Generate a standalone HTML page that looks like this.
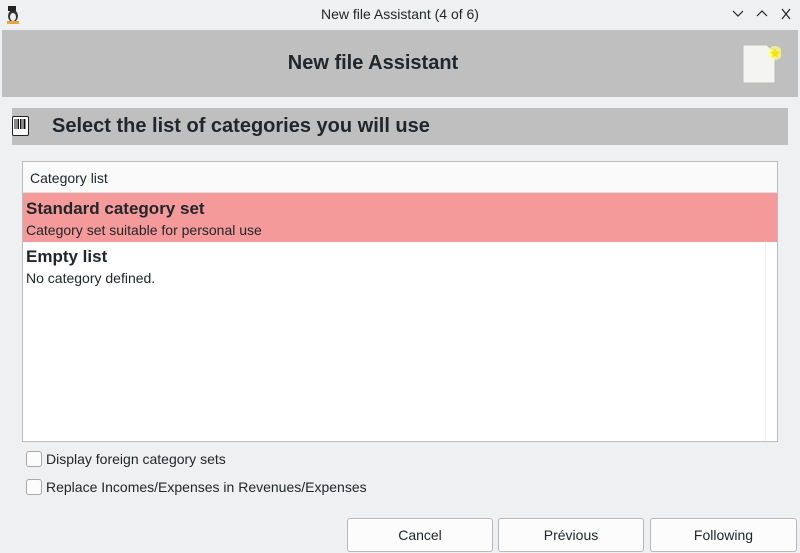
<!DOCTYPE html>
<html><head><style>
*{margin:0;padding:0;box-sizing:border-box}
body{width:800px;height:553px;background:#eff0f1;font-family:"Liberation Sans",sans-serif;color:#232629;position:relative;overflow:hidden}
.a{position:absolute}
</style></head><body>
<div class="a" style="left:4px;top:4px;width:18px;height:20px">
<svg width="18" height="20"><ellipse cx="9" cy="12" rx="5" ry="6" fill="#333"/><ellipse cx="9" cy="13" rx="3" ry="4" fill="#eee"/><rect x="4" y="2" width="8" height="5" fill="#222"/><rect x="3" y="17" width="12" height="3" fill="#e8a33a"/></svg></div>
<div class="a" style="left:0;width:800px;top:6px;text-align:center;font-size:14px">New file Assistant (4 of 6)</div>
<div class="a" style="left:732px;top:6px;font-size:13px">
<svg width="62" height="16" fill="none" stroke="#232629" stroke-width="1.2"><path d="M1 5l5 5 5-5"/><path d="M25 10l5-5 5 5"/><path d="M50 3l8 10M58 3l-8 10"/></svg></div>
<div class="a" style="left:2px;top:30px;width:796px;height:67px;background:#bfbfbf"></div>
<div class="a" style="left:0;width:746px;top:52px;text-align:center;font-size:20px;font-weight:bold">New file Assistant</div>
<div class="a" style="left:741px;top:43px">
<svg width="40" height="44"><path d="M2 2h24l8 8v30H2z" fill="#f4f4f2" stroke="#bbb"/><circle cx="34" cy="10" r="7" fill="#ffff80" opacity=".7"/><path d="M34 5l1.5 3.5 3.5.3-2.7 2.3.9 3.5-3.2-2-3.2 2 .9-3.5-2.7-2.3 3.5-.3z" fill="#f5e400"/></svg></div>
<div class="a" style="left:12px;top:108px;width:776px;height:37px;background:#bfbfbf"></div>
<div class="a" style="left:12px;top:116px;width:17px;height:20px;background:#fff;border:1.5px solid #222;border-radius:2px">
<svg width="14" height="17" style="position:absolute;left:0;top:0"><path d="M2 2v10M4 2v10M5.5 2v10M7.5 2v10M9 2v10M11 2v10M12 2v10" stroke="#111" stroke-width="1"/></svg></div>
<div class="a" style="left:52px;top:115px;font-size:20px;font-weight:bold">Select the list of categories you will use</div>
<div class="a" style="left:22px;top:161px;width:756px;height:281px;background:#fff;border:1px solid #bcbcbc"></div>
<div class="a" style="left:23px;top:162px;width:754px;height:31px;background:#fafafa;border-bottom:1px solid #e0e0e0"></div>
<div class="a" style="left:30px;top:170px;font-size:14px">Category list</div>
<div class="a" style="left:23px;top:193px;width:754px;height:49px;background:#f49a9a"></div>
<div class="a" style="left:26px;top:199px;font-size:17px;font-weight:bold">Standard category set</div>
<div class="a" style="left:26px;top:222px;font-size:14px">Category set suitable for personal use</div>
<div class="a" style="left:26px;top:247px;font-size:17px;font-weight:bold">Empty list</div>
<div class="a" style="left:26px;top:270px;font-size:14px">No category defined.</div>
<div class="a" style="left:765px;top:242px;width:1px;height:199px;background:#eee"></div>
<div class="a" style="left:26px;top:451px;width:16px;height:16px;background:#fcfcfc;border:1px solid #a8a8a8;border-radius:3px"></div>
<div class="a" style="left:46px;top:451px;font-size:14px">Display foreign category sets</div>
<div class="a" style="left:26px;top:479px;width:16px;height:16px;background:#fcfcfc;border:1px solid #a8a8a8;border-radius:3px"></div>
<div class="a" style="left:46px;top:479px;font-size:14px">Replace Incomes/Expenses in Revenues/Expenses</div>
<div class="a" style="left:347px;top:518px;width:146px;height:34px;background:#fcfcfc;border:1px solid #b8b8b8;border-radius:3px;text-align:center;line-height:33px;font-size:14px">Cancel</div>
<div class="a" style="left:498px;top:518px;width:146px;height:34px;background:#fcfcfc;border:1px solid #b8b8b8;border-radius:3px;text-align:center;line-height:33px;font-size:14px">Prévious</div>
<div class="a" style="left:650px;top:518px;width:147px;height:34px;background:#fcfcfc;border:1px solid #b8b8b8;border-radius:3px;text-align:center;line-height:33px;font-size:14px">Following</div>
</body></html>
